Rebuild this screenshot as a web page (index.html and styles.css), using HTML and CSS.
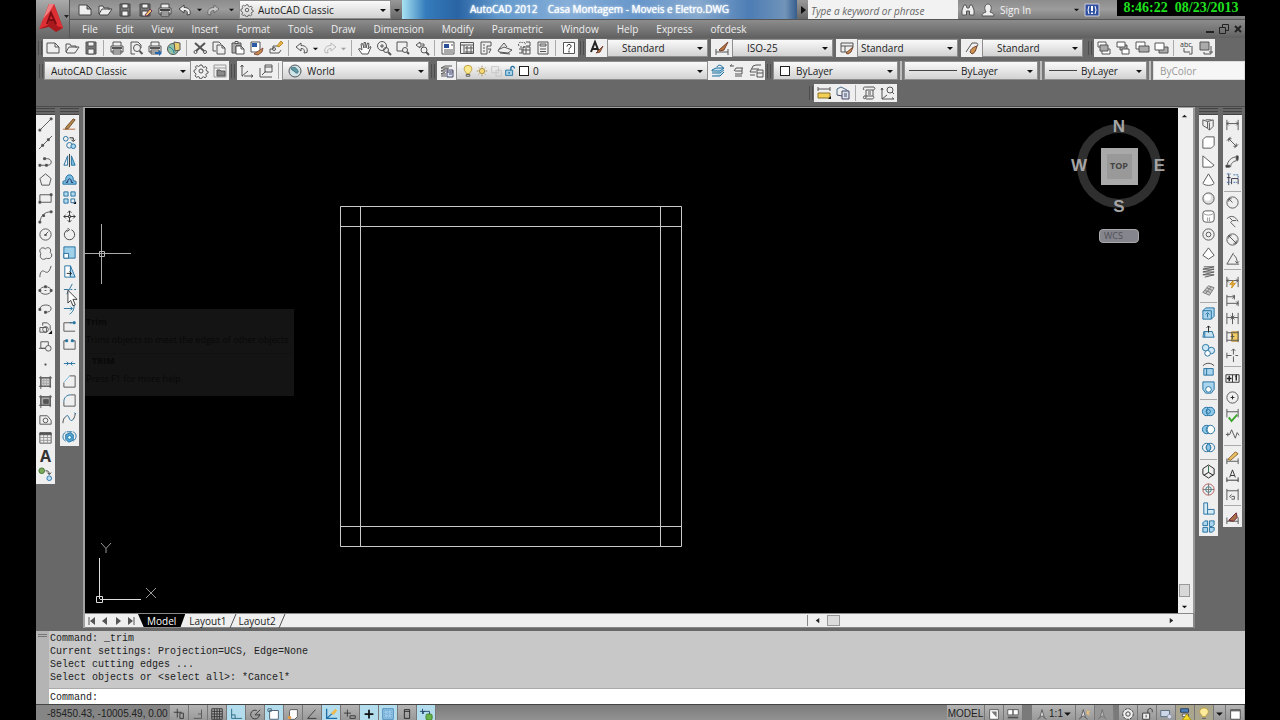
FILE: index.html
```html
<!DOCTYPE html>
<html lang="en">
<head>
<meta charset="utf-8">
<title>AutoCAD 2012 - Casa Montagem - Moveis e Eletro.DWG</title>
<link rel="stylesheet" href="styles.css">
</head>
<body>
<svg class="defs" aria-hidden="true">
  <symbol id="new" viewBox="0 0 16 16"><path d="M2 3h8l4 4v6H2zM10 3v4h4"/></symbol>
  <symbol id="open" viewBox="0 0 16 16"><path d="M2 12V4h4l1 2h5v2M2 12l3-5h10l-4 6H3z"/></symbol>
  <symbol id="save" viewBox="0 0 16 16"><path d="M3 2h10v12H3z" fill="#777"/><path d="M5 2h6v4H5zM5 9h6v5H5z" fill="#f4f4f4"/></symbol>
  <symbol id="print" viewBox="0 0 16 16"><path d="M4 6V2h8v4M2 6h12v6H2zM4 10h8v4H4z"/><path d="M3 8h10" stroke-width="2"/></symbol>
  <symbol id="undo" viewBox="0 0 16 16"><path d="M2 7l5-4v2.500c5 0 7 3 6 7l-3 .5c1-3 0-4.500-3-4.500V11z"/></symbol>
  <symbol id="redo" viewBox="0 0 16 16"><path d="M14 7L9 3v2.500c-5 0-7 3-6 7l3 .5c-1-3 0-4.500 3-4.500V11z"/></symbol>
  <symbol id="gear" viewBox="0 0 16 16"><circle cx="8" cy="8" r="2"/><path d="M7 2h2l.6 1.800 1.400.6 1.700-.8 1.300 1.500-.9 1.600.5 1.300 1.500.5v1.500l-1.800.7-.5 1.200.8 1.500-1.600 1.300-1.600-.9-1.300.6-.6 1.500H7l-.6-1.700-1.400-.6-1.600.8-1.300-1.500.9-1.600-.6-1.300L1 9V7.300l1.600-.6.6-1.300-.8-1.600L4 2.600l1.500.9 1-.4z"/></symbol>
  <symbol id="caret" viewBox="0 0 8 8"><path d="M1 3h6L4 6z" fill="#111" stroke="none"/></symbol>
  <symbol id="glass" viewBox="0 0 16 16"><circle cx="9" cy="8" r="3.500"/><path d="M11.500 11l3 3" stroke-width="2"/></symbol>
  <symbol id="dim" viewBox="0 0 16 16"><path d="M2 3v11M14 3v11M2 7h12M4 5L2 7l2 2M12 5l2 2-2 2"/></symbol>
  <symbol id="person" viewBox="0 0 12 16"><path d="M6 3l2.500 9L6 10l-2.500 2zM3.500 12L1 14M8.500 12l2.500 2" fill="#eee"/></symbol>
</svg>

<div class="app">
  <header class="head">
    <button class="appbtn" aria-label="Application menu">
      <svg viewBox="0 0 34 38"><path d="M13 4h5l9 24-7 4-7-5-9 2z" fill="#a8181d" stroke="none"/><path d="M13 4L3 29l9-4 2-5h5l2 6 6 2L18 4z" fill="#dc3034" stroke="none"/><path d="M13 4L7 19l7-8 4-7z" fill="#f08083" stroke="none"/><path d="M11 24l4-11 5 11M12 20h7" stroke="#7d0d12" stroke-width="2"/><path d="M28 15h5l-2.500 3z" fill="#222" stroke="none"/></svg>
    </button>
    <div class="titlebar">
      <div class="qat">
        <button aria-label="New"><svg><use href="#new"/></svg></button>
        <button aria-label="Open"><svg><use href="#open"/></svg></button>
        <button aria-label="Save"><svg><use href="#save"/></svg></button>
        <button aria-label="Save As"><svg viewBox="0 0 16 16"><use href="#save" width="16" height="16"/><path d="M8 13l5-6 2 2-5 5z" fill="#e6c665" stroke="#735"/></svg></button>
        <button aria-label="Plot"><svg><use href="#print"/></svg></button>
        <button aria-label="Undo"><svg><use href="#undo"/></svg></button>
        <button class="mini" aria-label="Undo list"><svg><use href="#caret"/></svg></button>
        <button class="dim" aria-label="Redo"><svg><use href="#redo"/></svg></button>
        <button class="mini" aria-label="Redo list"><svg><use href="#caret"/></svg></button>
      </div>
      <div class="combo w-title">
        <svg><use href="#gear"/></svg><select aria-label="Workspace"><option>AutoCAD Classic</option></select><svg class="arrow"><use href="#caret"/></svg>
      </div>
      <button class="slim" aria-label="Customize"><svg class="arrow"><use href="#caret"/></svg></button>
      <h1 class="title">AutoCAD 2012    Casa Montagem - Moveis e Eletro.DWG</h1>
      <button class="slim" aria-label="Collapse search"><svg class="arrow" viewBox="0 0 8 8"><path d="M2 0v8l5-4z" fill="#111" stroke="none"/></svg></button>
      <input class="search" type="text" aria-label="Search" placeholder="Type a keyword or phrase">
      <div class="account">
        <button aria-label="Find"><svg viewBox="0 0 16 16"><path d="M2 13V8l2-5h2l1 3h2l1-3h2l2 5v5H9.500V9h-3v4z" fill="#eee"/></svg></button>
        <button class="sign"><svg viewBox="0 0 16 16"><path d="M2 14c0-3 2-3 4-4-3-5 0-8 2-8s5 3 2 8c2 1 4 1 4 4z" fill="#eee"/></svg>Sign In</button>
        <button class="mini push" aria-label="Account menu"><svg><use href="#caret"/></svg></button>
        <button aria-label="Exchange"><svg viewBox="0 0 16 16"><path d="M1 2h14v12H1z" fill="#2f4fa0" stroke="#ccd"/><path d="M5 4L4 8l1 4M11 4l1 4-1 4" stroke="#fff"/><path d="M8 4v5M8 10.500V12" stroke="#fff" stroke-width="2"/></svg></button>
      </div>
    </div>
    <nav class="menu">
      <a href="#">File</a><a href="#">Edit</a><a href="#">View</a><a href="#">Insert</a><a href="#">Format</a><a href="#">Tools</a><a href="#">Draw</a><a href="#">Dimension</a><a href="#">Modify</a><a href="#">Parametric</a><a href="#">Window</a><a href="#">Help</a><a href="#">Express</a><a href="#">ofcdesk</a>
      <span class="winctl">
        <button aria-label="Minimize"><svg viewBox="0 0 10 10"><path d="M1 8h8" stroke="#222" stroke-width="2"/></svg></button>
        <button aria-label="Restore"><svg viewBox="0 0 10 10"><path d="M3.500 3V.5h6v6H7M.5 3.500h6v6h-6z" stroke="#222"/></svg></button>
        <button aria-label="Close"><svg viewBox="0 0 10 10"><path d="M2 2l6 6M8 2L2 8" stroke="#222" stroke-width="2"/></svg></button>
      </span>
    </nav>
    <time class="clock">8:46:22&nbsp; 08/23/2013</time>
  </header>

  <div class="rows">
    <div class="row">
      <i class="grip"></i>
      <div class="bar">
        <button aria-label="New"><svg><use href="#new"/></svg></button>
        <button aria-label="Open"><svg><use href="#open"/></svg></button>
        <button aria-label="Save"><svg><use href="#save"/></svg></button>
        <i class="sep"></i>
        <button aria-label="Plot"><svg><use href="#print"/></svg></button>
        <button aria-label="Plot preview"><svg viewBox="0 0 16 16"><path d="M3 14V2h7l3 3v3M3 14h4"/><use href="#glass" width="16" height="16"/></svg></button>
        <button aria-label="Publish"><svg viewBox="0 0 16 16"><use href="#print" width="16" height="16"/><path d="M8 12h4v-2l3 3-3 3v-2H8z" fill="#2468b0" stroke="none"/></svg></button>
        <button aria-label="3DDWF"><svg viewBox="0 0 16 16"><circle cx="7" cy="9" r="5.500" fill="#8fc3a8"/><path d="M8 2l6 1v7l-5 1z" fill="#e8cd6e"/><path d="M3 7c3 1 5 3 5 6" stroke="#277ca8"/></svg></button>
        <i class="sep"></i>
        <button aria-label="Cut"><svg viewBox="0 0 16 16"><path d="M3 3l9 8M13 3l-9 8" stroke-width="2"/><circle cx="3.500" cy="12" r="1.500"/><circle cx="13" cy="12" r="1.500"/></svg></button>
        <button aria-label="Copy"><svg viewBox="0 0 16 16"><path d="M5 11H2V2h6l2 2M6 5h5l3 3v6H6zM11 5v3h3"/></svg></button>
        <button aria-label="Paste"><svg viewBox="0 0 16 16"><path d="M2 3h9v3H6v7H2z" fill="#aaa"/><path d="M5 1.500h3v2H5zM6 6h5l3 3v5H6zM11 6v3h3" fill="#fff"/></svg></button>
        <button aria-label="Match properties"><svg viewBox="0 0 16 16"><path d="M2 2h9v10H2z" fill="#fff"/><path d="M3 3h5v4H3z" fill="#2b5aa6" stroke="none"/><path d="M8 12l6-4-1 4-4 3-4-1z" fill="#c98a4a" stroke="#854"/></svg></button>
        <button aria-label="Block editor"><svg viewBox="0 0 16 16"><path d="M2 13V9h3V6h5M2 13h9l2-3"/><circle cx="6" cy="9" r="1.500"/><path d="M9 6l4-5 2 2-4 4z" fill="#e8b54a" stroke="#b7892a"/></svg></button>
        <i class="sep"></i>
        <button aria-label="Undo"><svg><use href="#undo"/></svg></button>
        <button class="mini" aria-label="Undo list"><svg><use href="#caret"/></svg></button>
        <button class="faint" aria-label="Redo"><svg><use href="#redo"/></svg></button>
        <button class="mini faint" aria-label="Redo list"><svg><use href="#caret"/></svg></button>
        <i class="sep"></i>
        <button aria-label="Pan"><svg viewBox="0 0 16 16"><path d="M5 14L1.500 9l1.500-.5L5 10 4 4l1.500-.5L7 8V2.500h1.500L9 8l1.500-5 1.500.5L11 9l2-2.500 1 .5-3 7z" fill="#fff"/></svg></button>
        <button aria-label="Zoom realtime"><svg viewBox="0 0 16 16"><circle cx="6" cy="6" r="4.500"/><path d="M4 6h4M6 4v4"/><circle cx="10" cy="10" r="2.500"/><path d="M12 12l3 3" stroke-width="2"/></svg></button>
        <button aria-label="Zoom window"><svg viewBox="0 0 16 16"><path d="M8 11H2V2h10v5"/><circle cx="10" cy="10" r="2.500"/><path d="M12 12l2 2" stroke-width="2"/></svg></button>
        <button aria-label="Zoom previous"><svg viewBox="0 0 16 16"><path d="M6 2L2 5l4 3V6h4V4H6z"/><circle cx="10" cy="10" r="3"/><path d="M12 12l3 3" stroke-width="2"/></svg></button>
        <i class="sep"></i>
        <button aria-label="Properties"><svg viewBox="0 0 16 16"><path d="M2 2h12v12H2z" fill="#fff"/><path d="M4 4h5v4H4z" fill="#2b4f96" stroke="none"/><path d="M11 5h2M4 10h9M4 12h9"/></svg></button>
        <button aria-label="DesignCenter"><svg viewBox="0 0 16 16"><path d="M1.500 2.500h13v11h-13zM2 5h12M5 5v8M7 7h2v2H7zM11 7h2v2h-2zM7 11h2v2H7zM11 11h2v2h-2z"/></svg></button>
        <button aria-label="Tool palettes"><svg viewBox="0 0 16 16"><path d="M3 2h10v4H9v8H3zM5 5h2M5 8h2M5 11h2M10 9h3l-2 4"/></svg></button>
        <button aria-label="Sheet set"><svg viewBox="0 0 16 16"><path d="M2 9l5-6 3 4M1 10l6-3 8 3-4 3-9-1zM3 13l10 1"/></svg></button>
        <button aria-label="Markup"><svg viewBox="0 0 16 16"><path d="M3 6c-2-3 2-5 3-3 2-2 4 0 3 2M4 7h6" stroke-dasharray="2 1"/><path d="M10 2h4v4h-4M3 9h3v4H3M7 7h7v7H7zM7 10h7M10 8v6"/></svg></button>
        <button aria-label="QuickCalc"><svg viewBox="0 0 16 16"><path d="M3 2h10v12H3zM5 4h6v2H5zM5 9h6M5 11.500h6"/></svg></button>
        <i class="sep"></i>
        <button aria-label="Help"><svg viewBox="0 0 16 16"><path d="M2.500 2.500h11v11h-11z" fill="#fff"/><path d="M6 6.500c0-3 4.500-2.500 4 0 0 1.500-2 1-2 3M8 10.500v2" stroke="#222"/></svg></button>
      </div>
      <i class="grip"></i>
      <div class="styles">
        <div class="bar"><button aria-label="Text style"><svg viewBox="0 0 16 16"><path d="M2 12L6 2l4 10M3.500 9h5" stroke="#222" stroke-width="2"/><path d="M7 13l7-7-3 6z" fill="#b9733a" stroke="#743"/></svg></button></div>
        <div class="combo ind"><select aria-label="Text style"><option>Standard</option></select><svg class="arrow"><use href="#caret"/></svg></div>
      </div>
      <div class="styles">
        <div class="bar"><button aria-label="Dimension style"><svg viewBox="0 0 16 16"><path d="M2 9v6M14 9v6M2 12h12"/><path d="M5 10l9-8-4 8-4 1z" fill="#b9733a" stroke="#743"/></svg></button></div>
        <div class="combo ind"><select aria-label="Dimension style"><option>ISO-25</option></select><svg class="arrow"><use href="#caret"/></svg></div>
      </div>
      <div class="styles">
        <div class="bar"><button aria-label="Table style"><svg viewBox="0 0 16 16"><path d="M2 3h12v4M2 3v9h6M2 6h12M6 6v6"/><path d="M7 13l7-6-2 5-3 2z" fill="#c9924e" stroke="#743"/></svg></button></div>
        <div class="combo"><select aria-label="Table style"><option>Standard</option></select><svg class="arrow"><use href="#caret"/></svg></div>
      </div>
      <div class="styles">
        <div class="bar"><button aria-label="Multileader style"><svg viewBox="0 0 16 16"><path d="M2 12L8 3h4c3 0 2 4-1 4"/><path d="M6 12c1-4 4-5 7-6-1 4-2 7-5 8z" fill="#c9924e" stroke="#743"/></svg></button></div>
        <div class="combo ind"><select aria-label="Multileader style"><option>Standard</option></select><svg class="arrow"><use href="#caret"/></svg></div>
      </div>
      <i class="grip"></i>
      <div class="bar">
        <button aria-label="Bring to front"><svg viewBox="0 0 16 16"><path d="M2 2h8v5H2zM6 9h8v5H6z" fill="#fff"/><path d="M4 5h8v6H4z" fill="#aaa"/></svg></button>
        <button aria-label="Send to back"><svg viewBox="0 0 16 16"><path d="M5 5h7v5H5z" fill="#aaa"/><path d="M2 2h8v5H2zM7 9h7v5H7z" fill="#fff"/></svg></button>
        <button aria-label="Bring above"><svg viewBox="0 0 16 16"><path d="M2 2h9v7H2z" fill="#fff"/><path d="M5 6h10v6H5z" fill="#aaa"/></svg></button>
        <button aria-label="Send under"><svg viewBox="0 0 16 16"><path d="M6 7h9v6H6z" fill="#aaa"/><path d="M2 3h9v7H2z" fill="#fff"/></svg></button>
        <i class="sep"></i>
        <button aria-label="Text to front"><svg viewBox="0 0 16 16"><text x="1" y="7" font-size="7" fill="#333" stroke="none">abc</text><path d="M5 8v4h6M13 6v8h-3"/></svg></button>
        <button aria-label="Hatch to back"><svg viewBox="0 0 16 16"><path d="M2 2h9v8H2z" fill="#aaa"/><path d="M13 6v8H6v-2M11 12h4"/></svg></button>
      </div>
    </div>

    <div class="row second">
      <i class="grip"></i>
      <div class="combo w-ws"><select aria-label="Workspaces"><option>AutoCAD Classic</option></select><svg class="arrow"><use href="#caret"/></svg></div>
      <div class="bar">
        <button aria-label="Workspace settings"><svg><use href="#gear"/></svg></button>
        <button aria-label="My workspace"><svg viewBox="0 0 16 16"><path d="M2 2h12v12H2zM2 5h12" stroke="#999"/><path d="M5 7h3l1 1h4v5H5z" fill="#888"/></svg></button>
      </div>
      <i class="grip"></i>
      <div class="bar">
        <button aria-label="UCS"><svg viewBox="0 0 16 16"><path d="M3 2v11h11M3 13l6-5" stroke-dasharray="12 1"/><path d="M1.500 4L3 2l1.500 2M12 11.500l2 1.500-2 1.500"/></svg></button>
        <button aria-label="Named UCS"><svg viewBox="0 0 16 16"><path d="M2 5v9h12M7 2h7v7H7zM7 4h7M4 12l4-4"/></svg></button>
        <i class="sep"></i>
      </div>
      <div class="combo w-ws"><svg viewBox="0 0 16 16"><circle cx="8" cy="8" r="6" fill="#cfe3e8"/><path d="M4 5c4-2 6 1 7 3s-2 3-3 1-4-1-4-4z" fill="#5d9aa5" stroke="#48757e"/></svg><select aria-label="UCS"><option>World</option></select><svg class="arrow"><use href="#caret"/></svg></div>
      <i class="grip"></i>
      <div class="bar">
        <button aria-label="Layer properties"><svg viewBox="0 0 16 16"><path d="M2 5l4-2h7M2 8l4-2h3M2 11l4-2M2 5h8M2 8h5M2 11h5M2 13h5"/><path d="M8 7h6v7H8zM8 9h6M10 11h3" fill="#dfe8f5" stroke="#446"/></svg></button>
      </div>
      <div class="combo grow">
        <svg class="lay" viewBox="0 0 14 16"><path d="M5 11c0-2-2.500-3-2.500-5.500a4.500 4 0 0 1 9 0C11.500 8 9 9 9 11z" fill="#fbe98b" stroke="#b99a3a"/><path d="M5 12h4v2H5z"/></svg>
        <svg class="lay" viewBox="0 0 14 16"><circle cx="7" cy="8" r="3" fill="#f7d977" stroke="#a58a3c"/><path d="M7 2v2M7 12v2M1 8h2M11 8h2M3 4l1 1M11 4l-1 1M3 12l1-1M11 12l-1-1" stroke="#a58a3c"/></svg>
        <svg class="lay" viewBox="0 0 14 16"><path d="M2 3h8v7H2zM7 7h6v7H7z" stroke="#c4c4c4"/></svg>
        <svg class="lay" viewBox="0 0 14 16"><path d="M2 7h8v6H2z" fill="#a8d3ea" stroke="#1e6f9e"/><path d="M8 7V5c0-3 4-3 4 0M6 9v2" stroke="#1e6f9e" stroke-width="1.500"/></svg>
        <i class="swatch"></i>
        <select aria-label="Layer"><option>0</option></select><svg class="arrow"><use href="#caret"/></svg>
      </div>
      <div class="bar">
        <button aria-label="Make current"><svg viewBox="0 0 16 16"><path d="M2 7l4-2h8l-4 3H2zM2 10h8l4-3M2 13h8l4-4" fill="#bfe0f0" stroke="#1e6f9e"/><path d="M7 4c1-3 5-2 6 1" stroke="#1e6f9e"/></svg></button>
        <button aria-label="Layer previous"><svg viewBox="0 0 16 16"><path d="M1 3h4M1 3l2-1.500M7 5h7M6 8h7M6 11h7M7 5L5 8M13 5v6M6 13h7"/></svg></button>
        <button aria-label="Layer states"><svg viewBox="0 0 16 16"><path d="M5 3l3-1h5M4 6h7M2 9h6M2 12h5M5 3L2 9M9 7h6v7H9zM9 10h6"/></svg></button>
      </div>
      <i class="grip"></i>
      <div class="combo w-color"><i class="swatch"></i><select aria-label="Color"><option>ByLayer</option></select><svg class="arrow"><use href="#caret"/></svg></div>
      <i class="bsep"></i>
      <div class="combo w-ltype"><i class="line"></i><select aria-label="Linetype"><option>ByLayer</option></select><svg class="arrow"><use href="#caret"/></svg></div>
      <i class="bsep"></i>
      <div class="combo w-lw"><i class="line"></i><select aria-label="Lineweight"><option>ByLayer</option></select><svg class="arrow"><use href="#caret"/></svg></div>
      <i class="bsep"></i>
      <div class="combo w-plot"><select aria-label="Plot style" disabled><option>ByColor</option></select></div>
    </div>

    <div class="row inquiry">
      <i class="grip"></i>
      <div class="bar">
        <button aria-label="Distance"><svg viewBox="0 0 16 16"><path d="M2 2v4M14 2v4M2 4h12"/><path d="M2 8h12v5H2z" fill="#f3cf55" stroke="#8b742b"/><path d="M12 14h3v-3z" fill="#111" stroke="none"/></svg></button>
        <button aria-label="Region"><svg viewBox="0 0 16 16"><path d="M2 10V4l4-2 6 3v2" stroke="#4a6a86"/><path d="M7 6h7v8H7zM9 9h3M9 11h3M2 10l5 1" fill="#dde6ee" stroke="#446"/></svg></button>
        <i class="sep"></i>
        <button aria-label="List"><svg viewBox="0 0 16 16"><path d="M3 5c-2-3 1-3 2-3h8c2 2 0 3-1 3H5v8c-3 2-3-1-2-2h8c3 0 2 3 0 3H5M12 5v6M7 7h3M7 9h3"/></svg></button>
        <button aria-label="Locate point"><svg viewBox="0 0 16 16"><path d="M2 3v11h12M2 14l5-4M1 5l1-2 1 2M12 12.500l2 1.500"/><circle cx="10" cy="5" r="3"/><path d="M12 7l2 2"/></svg></button>
      </div>
    </div>
  </div>

  <main class="work">
    <aside class="dock">
      <div class="palette">
        <i class="pgrip"></i>
        <div class="col p-draw">
          <button aria-label="Line"><svg viewBox="0 0 16 16"><path d="M2 14L14 2"/><path d="M1 13h2v2H1zM13 1h2v2h-2z" fill="#444"/></svg></button>
          <button aria-label="Construction line"><svg viewBox="0 0 16 16"><path d="M1 15L15 1"/><path d="M4 10h2v2H4zM10 4h2v2h-2z" fill="#444"/></svg></button>
          <button aria-label="Polyline"><svg viewBox="0 0 16 16"><path d="M3 12h7c6 0 5-7 0-7H7"/><path d="M1 11h2v2H1zM8 11h2v2H8zM6 4h2v2H6z" fill="#444"/></svg></button>
          <button aria-label="Polygon"><svg viewBox="0 0 16 16"><path d="M8 2l6 5-2 7H4L2 7z"/></svg></button>
          <button aria-label="Rectangle"><svg viewBox="0 0 16 16"><path d="M2 4h12v8H2z"/><path d="M1 11h2v2H1zM13 3h2v2h-2z" fill="#444"/></svg></button>
          <button aria-label="Arc"><svg viewBox="0 0 16 16"><path d="M2 14C3 7 7 3 14 3"/><path d="M1 13h2v2H1zM5 6h2v2H5zM13 2h2v2h-2z" fill="#444"/></svg></button>
          <button aria-label="Circle"><svg viewBox="0 0 16 16"><circle cx="8" cy="8" r="6"/><path d="M8 8l3-3M7 8h2v1H7z"/></svg></button>
          <button aria-label="Revision cloud"><svg viewBox="0 0 16 16"><path d="M8 3c3-3 7 0 5 4 4 3 0 8-4 6-4 3-8 0-6-5-3-4 1-8 5-5z"/></svg></button>
          <button aria-label="Spline"><svg viewBox="0 0 16 16"><path d="M2 14c0-5 2-8 5-6s5 1 7-6"/></svg></button>
          <button aria-label="Ellipse"><svg viewBox="0 0 16 16"><ellipse cx="8" cy="8" rx="6" ry="4"/><path d="M7 8h2M1 7h2v2H1zM13 7h2v2h-2zM7 3h2v2H7z" fill="#444"/></svg></button>
          <button aria-label="Ellipse arc"><svg viewBox="0 0 16 16"><path d="M2 8c1-5 12-5 12 0 0 3-3 4-6 4"/><path d="M1 8h2v2H1zM7 11h2v2H7z" fill="#444"/></svg></button>
          <button aria-label="Insert block"><svg viewBox="0 0 16 16"><path d="M5 6V3h5l3 3v5M2 8h7v5H2z"/><circle cx="8" cy="10" r="3"/><path d="M11 15h4v-4z" fill="#111" stroke="none"/></svg></button>
          <button aria-label="Make block"><svg viewBox="0 0 16 16"><path d="M3 4h8v7H3zM1 11h8"/><circle cx="11" cy="11" r="3" fill="#eee"/></svg></button>
          <button aria-label="Point"><svg viewBox="0 0 16 16"><path d="M7 7h2v2H7z" fill="#444" stroke="none"/></svg></button>
          <button aria-label="Hatch"><svg viewBox="0 0 16 16"><path d="M3 3h10v9H3z" fill="#ccc"/><path d="M1 3h14M3 1v14M13 1v13M1 12h13"/><path d="M4 6h8M4 9h8M6 4v8M9 4v8" stroke="#aaa"/></svg></button>
          <button aria-label="Gradient"><svg viewBox="0 0 16 16"><path d="M3 3h10v9H3z" fill="#aaa"/><path d="M1 3h14M3 1v14M13 1v13M1 12h13"/><path d="M6 6h5v4H6z" fill="#555"/></svg></button>
          <button aria-label="Region"><svg viewBox="0 0 16 16"><path d="M2 13V4h8l4 5v4z"/><circle cx="8" cy="9" r="2.500"/></svg></button>
          <button aria-label="Table"><svg viewBox="0 0 16 16"><path d="M2 3h12v11H2z"/><path d="M2 8h12M2 11h12M6 5v9M10 5v9" stroke="#999"/><path d="M2 3h12v2H2z" fill="#555"/></svg></button>
          <button class="letter">A</button>
          <button aria-label="Add selected"><svg viewBox="0 0 16 16"><circle cx="4" cy="4" r="3" fill="#7cab5c" stroke="#487338"/><circle cx="12" cy="12" r="2.500" fill="#bcdcf2" stroke="#2c78b4"/><path d="M8 4c3 0 4 1 4 4M10 6l2 2 2-2" stroke="#333"/></svg></button>
        </div>
      </div>
      <div class="palette">
        <i class="pgrip"></i>
        <div class="col p-modify blue">
          <button aria-label="Erase"><svg viewBox="0 0 16 16"><path d="M1 13h13" stroke="#b5652d"/><path d="M4 11l8-9 2 1-7 9-3 1z" fill="#b78a4c" stroke="#6d4b28"/></svg></button>
          <button aria-label="Copy"><svg viewBox="0 0 16 16"><circle cx="4" cy="4" r="2.500"/><circle cx="8" cy="11" r="3"/><circle cx="12" cy="12" r="2.500" fill="#a8d4ee"/><path d="M8 3h4v3M10 5l2 2 2-2" stroke="#222"/></svg></button>
          <button aria-label="Mirror"><svg viewBox="0 0 16 16"><path d="M6 3v10H2z"/><path d="M10 3v10h4z" fill="#7bbde2"/><path d="M8 1v14" stroke="#333"/></svg></button>
          <button aria-label="Offset"><svg viewBox="0 0 16 16"><path d="M1 13v-3l3-1c-1-8 9-8 8 0l3 1v3z" fill="#7bbde2"/><path d="M4 11h2c0-5 4-5 4 0h2" stroke="#125"/></svg></button>
          <button aria-label="Array"><svg viewBox="0 0 16 16"><path d="M2 2h4.500v4.500H2zM9.500 2H14v4.500H9.500zM2 9.500h4.500V14H2z" fill="#b7dcf1"/><path d="M9.500 9.500h4v4h-4z"/><path d="M12 15h3v-3z" fill="#111" stroke="none"/></svg></button>
          <button aria-label="Move"><svg viewBox="0 0 16 16"><path d="M8 2v12M2 8h12M6 4l2-2 2 2M6 12l2 2 2-2M4 6L2 8l2 2M12 6l2 2-2 2" stroke="#333"/><path d="M7 7h2v2H7z" stroke="#333" fill="#fff"/></svg></button>
          <button aria-label="Rotate"><svg viewBox="0 0 16 16"><path d="M10 3a5.500 5.500 0 1 1-4 0M6 1l2 2-3 2" stroke="#444"/></svg></button>
          <button aria-label="Scale"><svg viewBox="0 0 16 16"><path d="M2 2h12v12H2z" fill="#9fd0ea"/><path d="M2 9h5v5H2z" fill="#fff"/></svg></button>
          <button aria-label="Stretch"><svg viewBox="0 0 16 16"><path d="M3 2h6v12H3z" fill="#fff"/><path d="M9 2l5 12H9z" fill="#b7dcf1"/><path d="M5 10h5M8 8l2 2-2 2" stroke="#222"/></svg></button>
          <button aria-label="Trim"><svg viewBox="0 0 16 16"><path d="M2 8h5M9 8h2M13 8h2M5 13l6-11"/></svg></button>
          <button aria-label="Extend"><svg viewBox="0 0 16 16"><path d="M2 8h9M9 6l2 2-2 2M8 14c4-2 5-6 5-11"/></svg></button>
          <button aria-label="Break at point"><svg viewBox="0 0 16 16"><path d="M11 4H2v9h12" stroke="#555"/><path d="M8 4h4M12 3h2v2h-2z" fill="#24709f"/></svg></button>
          <button aria-label="Break"><svg viewBox="0 0 16 16"><path d="M5 4H2v9h12V4h-3" stroke="#555"/><path d="M4 3h2v2H4zM10 3h2v2h-2z" fill="#24709f"/></svg></button>
          <button aria-label="Join"><svg viewBox="0 0 16 16"><path d="M2 8h12M5 6l2 2-2 2M11 6L9 8l2 2"/></svg></button>
          <button aria-label="Chamfer"><svg viewBox="0 0 16 16"><path d="M8 2h6v12H2V9" stroke="#555"/><path d="M2 9l6-7" stroke="#7bbde2"/></svg></button>
          <button aria-label="Fillet"><svg viewBox="0 0 16 16"><path d="M9 2h5v12H2V9" stroke="#555"/><path d="M2 9c0-4 3-7 7-7"/></svg></button>
          <button aria-label="Blend curves"><svg viewBox="0 0 16 16"><path d="M1 13c0-3 1-6 3-7M12 9c1-2 2-4 2-6" stroke="#444"/><path d="M4 6c4-5 3 8 8 3M13 2l2 1"/></svg></button>
          <button aria-label="Explode"><svg viewBox="0 0 16 16"><path d="M4 3c-4 3-4 8 0 10M12 13c4-3 4-8 0-10M5 3h6"/><path d="M4 6l5-2 3 2v6l-5 2-3-3z" fill="#54a9dc"/><circle cx="8" cy="9" r="2" fill="#dff"/></svg></button>
        </div>
      </div>
      <svg class="cursor" viewBox="0 0 12 19"><path d="M1 1v14l3-3 2.500 6 2.500-1-2.500-6H11z" fill="#fff" stroke="#333"/></svg>
    </aside>

    <section class="view">
      <div class="canvas">
        <svg class="drawing"><path d="M255.500 98.500h341v340h-341zM255.500 118.500h341M255.500 418.500h341M275.500 98.500v340M575.500 98.500v340" stroke="#c8c8c8"/><path d="M0 145.500h46M16.500 116v60" stroke="#aaa"/><path d="M14.500 143.500h5v5h-5z" stroke="#bbb"/></svg>
        <div class="tip" role="tooltip"><b>Trim</b><p>Trims objects to meet the edges of other objects</p><b class="cmd-name">TRIM</b><p>Press F1 for more help</p></div>
        <svg class="ucs" viewBox="0 0 70 70"><path d="M6.500 15v41M7 56.500h41M3.500 53.500h6v6h-6z" stroke="#ddd"/><path d="M8 0l5 5.500V10M18 0l-5 5.500M53 45l10 10M63 45L53 55" stroke="#999"/></svg>
        <div class="cube">
          <span class="n">N</span><span class="w">W</span><button class="top">TOP</button><span class="e">E</span><span class="s">S</span>
        </div>
        <button class="wcs">WCS</button>
      </div>
      <div class="vscroll">
        <button aria-label="Scroll up"><svg viewBox="0 0 8 8"><path d="M1 6h6L4 3z" fill="#222" stroke="none"/></svg></button>
        <i class="vthumb"></i>
        <button aria-label="Scroll down"><svg><use href="#caret"/></svg></button>
      </div>
      <div class="tabs">
        <span class="nav">
          <button aria-label="First"><svg viewBox="0 0 8 8"><path d="M1 0v8" stroke="#555"/><path d="M7 0v8L2 4z" fill="#555" stroke="none"/></svg></button>
          <button aria-label="Previous"><svg viewBox="0 0 8 8"><path d="M6 0v8L1 4z" fill="#555" stroke="none"/></svg></button>
          <button aria-label="Next"><svg viewBox="0 0 8 8"><path d="M2 0v8l5-4z" fill="#555" stroke="none"/></svg></button>
          <button aria-label="Last"><svg viewBox="0 0 8 8"><path d="M7 0v8" stroke="#555"/><path d="M1 0v8l5-4z" fill="#555" stroke="none"/></svg></button>
        </span>
        <button class="tab on">Model</button><button class="tab">Layout1</button><svg class="slash" viewBox="0 0 8 14"><path d="M1 14L7 0"/></svg><button class="tab">Layout2</button><svg class="slash" viewBox="0 0 8 14"><path d="M1 14L7 0"/></svg>
        <div class="hscroll">
          <button aria-label="Scroll left"><svg viewBox="0 0 8 8"><path d="M6 1v6L2 4z" fill="#222" stroke="none"/></svg></button>
          <i class="hthumb"></i>
          <button class="push" aria-label="Scroll right"><svg viewBox="0 0 8 8"><path d="M2 1v6l4-3z" fill="#222" stroke="none"/></svg></button>
        </div>
      </div>
    </section>

    <aside class="dock right">
      <div class="palette">
        <i class="pgrip"></i>
        <div class="col p-model">
          <button aria-label="Polysolid"><svg viewBox="0 0 16 16"><path d="M2 3l5 2v7l-5-3zM7 5l6-2v7l-4 4-2-2M9 6v8M5 3h6"/></svg></button>
          <button aria-label="Box"><svg viewBox="0 0 16 16"><path d="M2 5l3-3h9v9l-3 3H2z" fill="#fff"/></svg></button>
          <button aria-label="Wedge"><svg viewBox="0 0 16 16"><path d="M2 2l12 10-3 2H2z" fill="#fff"/></svg></button>
          <button aria-label="Cone"><svg viewBox="0 0 16 16"><path d="M8 2l6 10c-2 3-10 3-12 0z" fill="#fff"/></svg></button>
          <button aria-label="Sphere"><svg viewBox="0 0 16 16"><circle cx="8" cy="8" r="6" fill="#ddd"/><circle cx="7" cy="7" r="3.500" fill="#fff" stroke="none"/></svg></button>
          <button aria-label="Cylinder"><svg viewBox="0 0 16 16"><rect x="2" y="2" width="12" height="12" rx="3" fill="#fff"/><path d="M3 5c3 2 7 2 10 0M7 9v4M9 9v4" stroke="#999"/></svg></button>
          <button aria-label="Torus"><svg viewBox="0 0 16 16"><circle cx="8" cy="8" r="6"/><circle cx="8" cy="8" r="2.500"/></svg></button>
          <button aria-label="Pyramid"><svg viewBox="0 0 16 16"><path d="M8 2l6 8-6 4-6-4z" fill="#fff"/></svg></button>
          <button aria-label="Helix"><svg viewBox="0 0 16 16"><path d="M3 3h11L2 5.500h12L2 8.500h12L2 11.500h12L4 14"/></svg></button>
          <button aria-label="Planar surface"><svg viewBox="0 0 16 16"><path d="M2 10l6-7 6 2-5 8zM4 8l6 2M6 5l6 3M5 11l6-7" fill="#ccc" stroke="#777"/></svg></button>
          <i class="hsep"></i>
          <button class="bl" aria-label="Extrude"><svg viewBox="0 0 16 16"><path d="M2 5l3-3h9v9l-3 3H2z" fill="#a9d5ee"/><path d="M2 5h9v9M7 12V8M5 9l2-2 2 2"/></svg></button>
          <button class="bl" aria-label="Presspull"><svg viewBox="0 0 16 16"><path d="M3 7h9l2 6H2zM4 7v6" fill="#c6e3f3"/><path d="M8 8V1M6 3l2-2 2 2" stroke="#222"/></svg></button>
          <button class="bl" aria-label="Sweep"><svg viewBox="0 0 16 16"><circle cx="5" cy="5" r="3.500" fill="#cfe8f6"/><circle cx="11" cy="8" r="3.500" fill="#cfe8f6"/><circle cx="7" cy="11" r="3" fill="#fff"/></svg></button>
          <button class="bl" aria-label="Revolve"><svg viewBox="0 0 16 16"><path d="M2 4c4-4 9-3 12 0" stroke="#444"/><path d="M3 7h10v7H3zM6 7v7" fill="#a9d5ee"/></svg></button>
          <button class="bl" aria-label="Loft"><svg viewBox="0 0 16 16"><path d="M2 2h12v8l-3 4H5l-3-4z" fill="#a9d5ee"/><circle cx="8" cy="10" r="3" fill="#fff"/></svg></button>
          <i class="hsep"></i>
          <button class="bl" aria-label="Union"><svg viewBox="0 0 16 16"><circle cx="6" cy="8" r="4.500" fill="#8cc8ea"/><circle cx="10" cy="8" r="4.500" fill="#8cc8ea"/><circle cx="8" cy="8" r="2"/></svg></button>
          <button class="bl" aria-label="Subtract"><svg viewBox="0 0 16 16"><circle cx="6" cy="8" r="4.500" fill="#8cc8ea"/><circle cx="10" cy="8" r="4.500" fill="#fff"/><path d="M8 4.500c-2 2-2 5 0 7"/></svg></button>
          <button class="bl" aria-label="Intersect"><svg viewBox="0 0 16 16"><circle cx="6" cy="8" r="4.500"/><circle cx="10" cy="8" r="4.500"/><path d="M8 4c3 3 3 5 0 8-3-3-3-5 0-8" fill="#8cc8ea"/></svg></button>
          <i class="hsep"></i>
          <button aria-label="3D move"><svg viewBox="0 0 16 16"><path d="M8 1l6 4v6l-6 4-6-4V5z" stroke="#222"/><path d="M8 2v7" stroke="#276b45"/><path d="M8 9l-5 3M8 9l5 3" stroke="#111"/></svg></button>
          <button aria-label="3D rotate"><svg viewBox="0 0 16 16"><circle cx="8" cy="8" r="6" stroke="#b65b5b"/><circle cx="8" cy="8" r="3" stroke="#2c7d86"/><path d="M2 8h12M8 2v12" stroke="#777"/></svg></button>
          <button class="bl" aria-label="3D align"><svg viewBox="0 0 16 16"><path d="M3 2h4v7h7v5H3zM7 9v5" fill="#d7ebf6"/></svg></button>
          <button class="bl" aria-label="3D array"><svg viewBox="0 0 16 16"><path d="M2 4l2-2h3v5H2zM9 2h5v4l-2 2H9zM2 9h5v5H2zM9 9h5v3l-2 2H9z" fill="#a9d5ee"/></svg></button>
        </div>
      </div>
      <div class="palette">
        <i class="pgrip"></i>
        <div class="col p-dim">
          <button aria-label="Linear"><svg><use href="#dim"/></svg></button>
          <button aria-label="Aligned"><svg viewBox="0 0 16 16"><path d="M4 4l8 8M2 6l4-4M10 14l4-4M4 7V4h3M12 9v3H9"/></svg></button>
          <button aria-label="Arc length"><svg viewBox="0 0 16 16"><path d="M2 13C3 7 7 3 13 3M6 14c0-4 3-7 8-7"/><path d="M1 12h4v2H1zM12 2h2v4h-2z" fill="#333"/></svg></button>
          <button aria-label="Ordinate"><svg viewBox="0 0 16 16"><path d="M4 2v12M2 6h4M7 13V7h7v6" stroke="#334"/><path d="M2 2h4M2 11h4M9 3h5v4M9 11h4" stroke="#356ca5" stroke-dasharray="2 1"/></svg></button>
          <i class="hsep"></i>
          <button aria-label="Radius"><svg viewBox="0 0 16 16"><circle cx="8" cy="8" r="6"/><path d="M8 8L4 4M4 7V4h3"/></svg></button>
          <button aria-label="Jogged"><svg viewBox="0 0 16 16"><path d="M2 5c4-4 9-3 12 3M5 4l3 3-2 2 5 5M8 7h4"/></svg></button>
          <button aria-label="Diameter"><svg viewBox="0 0 16 16"><circle cx="8" cy="8" r="6"/><path d="M4 4l8 8M4 7V4h3M12 9v3H9"/></svg></button>
          <button aria-label="Angular"><svg viewBox="0 0 16 16"><path d="M9 2L2 14h13M9 4c3 2 4 5 4 9M11 11l2 2 2-2"/></svg></button>
          <i class="hsep"></i>
          <button aria-label="Quick dimension"><svg viewBox="0 0 16 16"><use href="#dim" width="16" height="16"/><path d="M9 7l-4 4h3l-1 4 4-5H8z" fill="#f3b93c" stroke="#c98e1c"/></svg></button>
          <button aria-label="Baseline"><svg viewBox="0 0 16 16"><path d="M2 2v12M10 2v5M14 8v6M2 4h8M2 11h12M8 2l2 2-2 2M12 9l2 2-2 2"/></svg></button>
          <button aria-label="Continue"><svg viewBox="0 0 16 16"><path d="M2 2v12M8 2v12M14 2v12M2 7h12M6 5l4 4M10 5L6 9"/></svg></button>
          <button aria-label="Dimension space"><svg viewBox="0 0 16 16"><path d="M7 3h7v10H7z" fill="#f3cc65" stroke="#b78b27"/><path d="M2 2v12M14 2v12M2 4h12M2 12h12M8 5v6M6 8h4"/></svg></button>
          <button aria-label="Dimension break"><svg viewBox="0 0 16 16"><path d="M9 1v6M9 9v6M2 8h5M11 8h3M2 5v6M7 3l2-2 2 2"/></svg></button>
          <i class="hsep"></i>
          <button aria-label="Tolerance"><svg viewBox="0 0 16 16"><path d="M1 4h14v8H1zM8 4v8" stroke="#333"/><path d="M4.500 5v6M2 8h5M11 6l1-1v5" stroke="#222" stroke-width="1.500"/></svg></button>
          <button aria-label="Center mark"><svg viewBox="0 0 16 16"><circle cx="8" cy="8" r="6"/><path d="M8 6v4M6 8h4" stroke="#222"/></svg></button>
          <button aria-label="Inspection"><svg viewBox="0 0 16 16"><path d="M2 1v9M14 1v9M2 4h12"/><path d="M4 10l3 4 6-7" stroke="#3aa52a" stroke-width="2"/></svg></button>
          <button aria-label="Jogged linear"><svg viewBox="0 0 16 16"><path d="M1 9h4l2-5 4 9 2-6 2 3M3 7v4"/></svg></button>
          <i class="hsep"></i>
          <button aria-label="Dimension edit"><svg viewBox="0 0 16 16"><path d="M2 9v6M14 9v6M2 12h12"/><path d="M3 10l8-8 3 2-8 7z" fill="#e9be64" stroke="#8b6327"/></svg></button>
          <button aria-label="Dimension text edit"><svg viewBox="0 0 16 16"><path d="M2 10v5M14 10v5M2 13h12M5 10l3-8 3 8M6 8h4" stroke="#333"/></svg></button>
          <button aria-label="Dimension update"><svg viewBox="0 0 16 16"><path d="M2 2v12M14 2v12M2 4h12M7 10h3v3H7M7 8l-2 2 2 2"/></svg></button>
          <i class="hsep"></i>
          <button aria-label="Dimension style"><svg viewBox="0 0 16 16"><path d="M2 8v7M14 8v7M2 12h12"/><path d="M4 11l8-8 1 5-4 4z" fill="#a86f4b" stroke="#623"/></svg></button>
        </div>
      </div>
    </aside>
  </main>

  <section class="command">
    <i class="cgrip"></i>
    <div class="cbody">
      <pre class="history">Command: _trim
Current settings: Projection=UCS, Edge=None
Select cutting edges ...
Select objects or &lt;select all&gt;: *Cancel*</pre>
      <label class="prompt">Command:<input type="text" aria-label="Command line"></label>
    </div>
  </section>

  <footer class="status">
    <output class="coords">-85450.43, -10005.49, 0.00</output>
    <div class="toggles">
      <button aria-label="Infer constraints"><svg viewBox="0 0 16 16"><path d="M6 2v10M2 6h9M9 7h4v6H9z" stroke="#333"/></svg></button>
      <button aria-label="Snap"><svg viewBox="0 0 16 16"><path d="M12 3v10H3M12 8H8" stroke="#555"/></svg></button>
      <button aria-label="Grid"><svg viewBox="0 0 16 16"><path d="M2 2h12v12H2zM5 2v12M8 2v12M11 2v12M2 5h12M2 8h12M2 11h12" stroke="#333"/></svg></button>
      <button class="on" aria-label="Ortho"><svg viewBox="0 0 16 16"><path d="M3 2v11h12M3 9h4v4" stroke="#24667f"/></svg></button>
      <button aria-label="Polar"><svg viewBox="0 0 16 16"><path d="M13 8a5 5 0 1 1-3-4M8 9l6-6M8 9h6" stroke="#333"/></svg></button>
      <button class="on" aria-label="Osnap"><svg viewBox="0 0 16 16"><path d="M3 4h10v10H3z" fill="#fff" stroke="#456"/><path d="M1 2h4v3H1z" stroke="#467"/></svg></button>
      <button aria-label="3D osnap"><svg viewBox="0 0 16 16"><path d="M5 3h8v8l-3 3H4V5z" fill="#fff"/><circle cx="4" cy="12" r="2" fill="#e69b45" stroke="none"/></svg></button>
      <button aria-label="Otrack"><svg viewBox="0 0 16 16"><path d="M12 3L3 13h10" stroke="#333"/></svg></button>
      <button class="on" aria-label="Dynamic UCS"><svg viewBox="0 0 16 16"><path d="M3 2v11h12M3 13l7-6" stroke="#1c6fa8" stroke-width="1.500"/><path d="M8 7l5-5 2 2-4 5z" fill="#efb94d" stroke="none"/></svg></button>
      <button aria-label="Dynamic input"><svg viewBox="0 0 16 16"><path d="M5 3v8M1 7h8M8 10h6v3H8z" stroke="#333"/></svg></button>
      <button class="on" aria-label="Lineweight"><svg viewBox="0 0 16 16"><path d="M8 3v10M3 8h10" stroke="#111" stroke-width="2"/></svg></button>
      <button class="on" aria-label="Transparency"><svg viewBox="0 0 16 16"><path d="M2 2h12v12H2z" fill="#9ccbea" stroke="#3d7fb2"/><path d="M4 4h8v8H4zM4 8h8M8 4v8" stroke="#5e9ecf" stroke-dasharray="1 1"/></svg></button>
      <button aria-label="Quick properties"><svg viewBox="0 0 16 16"><path d="M5 3h6v10H5zM5 5h6" stroke="#222"/></svg></button>
      <button class="on" aria-label="Selection cycling"><svg viewBox="0 0 16 16"><path d="M4 2v6M1 5h6M5 8V5h7v3" stroke="#246"/><rect x="8" y="8" width="7" height="7" rx="2" fill="#68b44b" stroke="#3a7a2a"/></svg></button>
    </div>
    <div class="toggles push">
      <button class="text w-model">MODEL</button>
      <button aria-label="Quick view layouts"><svg viewBox="0 0 16 16"><path d="M3 3h10v11H3z" fill="#fff"/><path d="M5 5l6 7V5z" fill="#777" stroke="none"/></svg></button>
      <button aria-label="Quick view drawings"><svg viewBox="0 0 16 16"><path d="M2 3h6v6H2zM8 3h6v6H8z" fill="#fff"/><path d="M2 12h12" stroke-width="2"/></svg></button>
      <i class="gap"></i>
      <button class="text w-scale"><svg viewBox="0 0 12 16"><use href="#person" width="12" height="16"/></svg>1:1<svg class="arrow"><use href="#caret"/></svg></button>
      <button aria-label="Annotation visibility"><svg viewBox="0 0 16 16"><use href="#person" width="12" height="16"/><path d="M10 2l1 3 3-1-2 3 2 3-4-2z" fill="#f2c071" stroke="none"/></svg></button>
      <button class="dim" aria-label="Auto scale"><svg viewBox="0 0 16 16"><use href="#person" width="12" height="16"/></svg></button>
      <i class="gap thin"></i>
      <button aria-label="Workspace"><svg viewBox="0 0 16 16"><circle cx="8" cy="8" r="6" fill="#eee" stroke="#333" stroke-dasharray="3 1"/><circle cx="8" cy="8" r="2.500" stroke="#333"/></svg></button>
      <button aria-label="Lock toolbars"><svg viewBox="0 0 16 16"><path d="M3 7h8v7H3z" fill="#eee" stroke="#333"/><path d="M9 7V4c0-3 5-3 5 0v2M7 9v3" stroke="#333"/></svg></button>
      <button aria-label="Hardware acceleration"><svg viewBox="0 0 16 16"><path d="M2 4h10v7H2z" fill="#ccd8ea" stroke="#567"/><circle cx="12" cy="11" r="2.500" fill="#dde" stroke="#89a"/></svg></button>
      <button class="lit" aria-label="Tray notice"><svg viewBox="0 0 16 16"><path d="M3 2h9v4H3z" fill="#4b82c0" stroke="#235"/><path d="M5 8h7v3H5z" fill="#eee"/><path d="M10 8l5 7H5z" fill="#f4dc22" stroke="#a68b12"/></svg></button>
      <button class="lit" aria-label="Isolate objects"><svg viewBox="0 0 16 16"><path d="M6 11c0-2-3-3-3-5.500a5 4.500 0 0 1 10 0C13 8 10 9 10 11z" fill="#fbeb9b" stroke="#b99a3a"/><path d="M6 13h4"/></svg></button>
      <button class="slim" aria-label="Status menu"><svg class="arrow"><use href="#caret"/></svg></button>
      <button aria-label="Clean screen"><svg viewBox="0 0 16 16"><path d="M3 3h11v11H3z" fill="#fff" stroke="#444"/><path d="M3 4h11" stroke="#666" stroke-width="2"/></svg></button>
    </div>
  </footer>
</div>
</body>
</html>
```
FILE: styles.css
```css
* { box-sizing: border-box; }
body { margin: 0; background: #000; font: 10px/14px "Open Sans", "Noto Sans", sans-serif; color: #222; }
svg { width: 16px; height: 16px; flex: none; fill: none; stroke: #555; display: block; overflow: visible; }
button { margin: 0; padding: 0; border: 0; background: none; font: inherit; color: inherit; display: flex; align-items: center; justify-content: center; }
.defs { position: absolute; width: 0; height: 0; }
.app { height: 100vh; margin: 0 35px 0 36px; display: flex; flex-direction: column; background: #686868; overflow: hidden; }
.push { margin-left: auto; }
.dim { opacity: .5; }
.faint { opacity: .35; }
.arrow { width: 8px; height: 8px; pointer-events: none; }

/* Title and menu */
.head { position: relative; display: grid; grid-template-columns: 34px 1fr; grid-template-rows: 20px 18px; }
.appbtn { grid-row: 1 / 3; background: linear-gradient(#aaa, #7d7d7d 60%, #666); border-right: 1px solid #555; }
.appbtn svg { width: 34px; height: 38px; }
.titlebar { display: flex; background: linear-gradient(#8c8c8c, #9c9c9c 50%, #7c7c7c); border-bottom: 1px solid #555; }
.qat { display: flex; align-items: center; padding-left: 5px; }
.qat button { width: 20px; }
.qat svg { stroke: #444; fill: #eee; }
.qat .mini { width: 8px; }
.mini { width: 10px; }
.mini svg { width: 7px; height: 7px; }
.qat .mini:last-child { width: 16px; }
.combo { display: flex; align-items: center; gap: 2px; height: 19px; padding: 0 3px 0 4px; background: linear-gradient(#fafafa, #e6e6e6 50%, #d2d2d2); border: 1px solid #8e8e8e; }
.combo select { flex: 1; min-width: 0; width: 100%; height: 17px; padding: 0 2px; border: 0; background: none; appearance: none; font: inherit; color: #222; }
.w-title { width: 152px; padding-left: 0; }
.w-title svg { width: 14px; height: 14px; }
.w-title .arrow, .combo .arrow { width: 8px; height: 8px; }
.slim { width: 11px; background: linear-gradient(#999, #666); }
.title { flex: 1; margin: 0; font-size: 10px; line-height: 19px; font-weight: 400; color: #fff; text-align: center; white-space: pre; text-shadow: 0 0 1px #fff, 0 0 3px #dceeff; background: linear-gradient(90deg, #a8e2f2, #347cbc 6%, #2a64a4 14%, #5f97cb 24%, #86aed8 42%, #6796ca 60%, #86a9ce 75%, #4d7db5 88%, #7194b9 97%, #365d8c); }
.search { width: 150px; padding: 3px 3px 0; border: 0; background: #f2f2f2; font: italic 10px/14px "Open Sans", sans-serif; }
.search::placeholder { color: #666; }
.account { display: flex; width: 287px; align-items: center; color: #f2f2f2; }
.account > button { width: 20px; height: 19px; }
.account > .sign { width: 72px; justify-content: flex-start; gap: 4px; padding-left: 2px; }
.account > .mini { width: 12px; margin-left: 20px; }
.clock { position: absolute; top: 0; right: 0; width: 128px; height: 16px; background: #000; color: #1fe01f; font: bold 14px/16px "Liberation Serif", serif; white-space: nowrap; text-align: center; }
.menu { display: flex; align-items: center; gap: 18px; padding: 0 2px 0 12px; background: linear-gradient(#8c8c8c, #777 50%, #606060); }
.menu a { color: #eee; text-decoration: none; }
.winctl { display: flex; gap: 4px; margin-left: auto; }
.winctl svg { width: 10px; height: 10px; }

/* Toolbars */
.rows { display: flex; flex-direction: column; gap: 4px; padding: 1px 0 4px; border-bottom: 1px solid #4a4a4a; }
.row { display: flex; height: 18px; padding-left: 1px; }
.row .combo { height: 18px; }
.row.second, .second .combo { height: 19px; }
.bar { display: flex; align-items: center; background: #efefef; }
.bar button { width: 19px; }
.bar .mini { width: 9px; }
.sep { width: 1px; height: 16px; margin: 0 3px; background: #aaa; }
.grip { width: 8px; flex: none; background: repeating-linear-gradient(90deg, #4d4d4d 0 1px, #686868 1px 3px) center / 4px 14px no-repeat; }
.row > .grip:first-child { width: 6px; }
.row.second { padding-left: 2px; }
.styles { display: flex; width: 125px; padding-right: 3px; }
.styles button { width: 21px; }
.styles .combo { flex: 1; padding-left: 1px; }
.styles .ind { padding-left: 12px; }
.w-ws { width: 147px; }
.w-color { width: 125px; }
.w-ltype { width: 134px; }
.w-lw { width: 103px; }
.grow { width: 252px; gap: 0; }
.grow .lay { width: 14px; height: 14px; }
.w-plot { flex: 1; background: #f6f6f6; border-color: #ddd; }
.w-plot select:disabled { color: #999; opacity: 1; }
.swatch { width: 10px; height: 10px; flex: none; margin: 0 2px; border: 1px solid #222; background: #fff; }
.line { flex: none; height: 1px; width: 48px; background: #444; }
.w-lw .line { width: 28px; }
.bsep { width: 6px; flex: none; background: #bdbdbd; border: solid #777; border-width: 0 2px; }
.inquiry { padding-left: 772px; }

/* Work area */
.work { flex: 1; min-height: 0; display: grid; grid-template-columns: 47px minmax(0, 1fr) 50px; }
.dock { position: relative; display: flex; align-items: flex-start; gap: 5px; padding: 1px 0 0; }
.dock.right { padding-left: 4px; }
.palette { width: 19px; }
.pgrip { display: block; height: 7px; background: repeating-linear-gradient(#444 0 1px, #666 1px 3px); }
.col { display: flex; flex-direction: column; background: #efefef; }
.col button { flex: 1; min-height: 0; width: 19px; }
.blue svg, .bl svg { stroke: #24709f; }
.col svg { width: 15px; height: 15px; }
.p-draw { height: 369px; }
.p-modify { height: 331px; }
.p-model { height: 421px; }
.p-dim { height: 412px; }
.hsep { height: 1px; margin: 2px 1px; background: #aaa; }
.letter { font: bold 16px/18px "Open Sans", sans-serif; }
.col .letter { color: #333; }
.dock .cursor { position: absolute; left: 31px; top: 182px; width: 11px; height: 18px; }
.view { display: grid; grid-template: minmax(0, 1fr) 15px / minmax(0, 1fr) 17px; border: solid #a2a2a2; border-width: 1px 0 0 2px; }
.canvas { position: relative; overflow: hidden; background: #000; }
.drawing { position: absolute; inset: 0; width: 100%; height: 100%; }
.tip { position: absolute; left: 0; top: 201px; width: 209px; height: 87px; padding: 6px 1px; background: #141414; color: #080808; font-size: 9px; line-height: 14px; }
.tip p { margin: 4px 0 6px; white-space: nowrap; }
.tip b { display: block; }
.tip .cmd-name { padding-left: 6px; border-top: 1px solid #111; }
.ucs { position: absolute; left: 8px; bottom: 0; width: 70px; height: 70px; }
.cube { position: absolute; right: 17px; top: 16px; width: 84px; height: 84px; border: 9px solid #2f2f2f; border-radius: 50%; display: grid; place-items: center; font: bold 17px/18px "Liberation Sans", sans-serif; color: #a5a5a5; }
.cube span { position: absolute; }
.n { top: -15px; }
.s { bottom: -17px; }
.w { left: -15px; }
.e { right: -13px; }
.top { width: 37px; height: 37px; border: 6px solid #a9a9a9; background: #999; color: #444; font: bold 9px/12px "Open Sans", sans-serif; }
.wcs { position: absolute; right: 39px; top: 121px; width: 40px; height: 14px; padding-left: 4px; justify-content: flex-start; border: 1px solid #aaa; border-radius: 4px; background: #85858d; color: #505058; font-size: 9px; line-height: 10px; }
.vscroll { display: flex; flex-direction: column; align-items: center; padding: 4px 2px 3px 0; background: #efefef; border-right: 2px solid #999; }
.vscroll svg, .hscroll svg { width: 7px; height: 7px; }
.vthumb { width: 11px; height: 13px; margin: auto 0 6px; border: 1px solid #999; background: #d8d8d8; }
.tabs { grid-column: 1 / 3; display: flex; align-items: center; background: #efefef; border: solid #888; border-width: 1px 2px 1px 0; }
.nav { display: flex; gap: 5px; padding: 0 3px; }
.nav svg { width: 8px; height: 8px; }
.tab { height: 13px; padding: 0 2px; }
.tab.on { margin-right: 2px; padding: 0 9px; background: #000; color: #fff; clip-path: polygon(0 0, 100% 0, 90% 100%, 12% 100%); }
.slash { width: 8px; height: 14px; }
.hscroll { display: flex; align-items: center; width: 386px; margin-left: auto; padding: 0 18px 0 6px; border-left: 1px solid #888; }
.hthumb { width: 13px; height: 11px; margin-left: 6px; border: 1px solid #999; background: #dcdcdc; }

/* Command line */
.command { display: flex; margin-top: 3px; background: #b4b4b4; }
.cgrip { width: 9px; height: 3px; margin: 3px 2px; border: solid #777; border-width: 1px 0; }
.cbody { flex: 1; font: 10px/13px "Liberation Mono", monospace; color: #222; }
.history { height: 58px; margin: 0; padding: 1px; font: inherit; background: #c8c8c8; border-bottom: 1px solid #aaa; }
.prompt { display: flex; align-items: center; height: 15px; padding: 1px 0 0 1px; background: #fff; }
.prompt input { flex: 1; height: 13px; border: 0; padding: 0 4px; font: inherit; background: none; }

/* Status bar */
.status { display: flex; height: 16px; background: linear-gradient(#7c7c7c, #929292); border-top: 1px solid #444; font: 10px/15px "Liberation Sans", sans-serif; }
.coords { width: 134px; padding: 1px 0 0 11px; background: #858585; white-space: nowrap; }
.toggles { display: flex; }
.toggles button { width: 19px; height: 15px; padding-top: 2px; border-right: 1px solid #777; background: linear-gradient(#b4b4b4, #999); }
.toggles svg { width: 14px; height: 14px; }
.toggles .on { background: #b3dcec; }
.toggles .w-model { width: 38px; }
.toggles .w-scale { width: 44px; }
.toggles .text .arrow, .toggles .arrow { width: 9px; height: 9px; }
.toggles .slim { width: 12px; }
.toggles .lit { background: #a9a58f; }
.gap { width: 9px; background: #7a7a7a; }
.gap.thin { width: 5px; }
```
